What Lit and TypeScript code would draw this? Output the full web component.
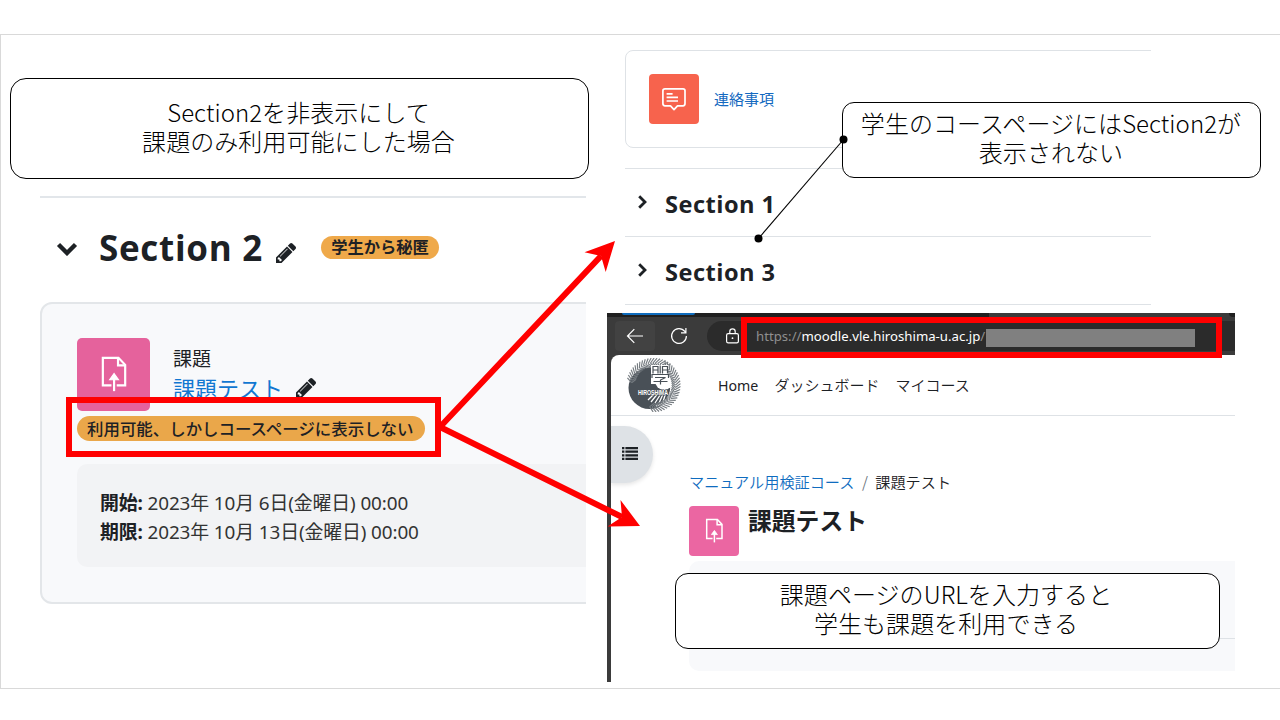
import { LitElement, html, svg, css } from "lit";
import { customElement, property } from "lit/decorators.js";

const pencil = html`<svg class="pencil" viewBox="128 149 1515 1515" preserveAspectRatio="none">
  <path fill="#1d2125" d="M491 1536l91-91-235-235-91 91v107h128v128h107zm523-928q0-22-22-22-10 0-17 7l-542 542q-7 7-7 17 0 22 22 22 10 0 17-7l542-542q7-7 7-17zm-54-192l416 416-832 832h-416v-416zm683 96q0 53-37 90l-166 166-416-416 166-165q36-38 90-38 53 0 91 38l235 234q37 39 37 91z"/>
</svg>`;

const assignIcon = html`<svg class="glyph" viewBox="0 0 50 50" fill="none" stroke="#fff" stroke-width="1.5">
  <path d="M23.6 32.4H17.7V13.6H28.4L33 18.4V32.4H27.2"/>
  <path d="M28.1 13.6V18.8H33" />
  <path d="M25.4 36.4V26"/>
  <path d="M25.4 24.4L28.4 28.6H22.4Z" fill="#fff" stroke-width=".8"/>
</svg>`;

const forumIcon = html`<svg class="glyph" viewBox="0 0 50 50" fill="none" stroke="#fff" stroke-width="1.7" stroke-linejoin="round">
  <path d="M16 14.8H34Q36 14.8 36 16.8V29.6Q36 31.9 34 31.9H28.5L25 35.6L21.5 31.9H16Q13.9 31.9 13.9 29.6V16.8Q13.9 14.8 16 14.8Z"/>
  <path d="M17.6 19.8H23.6M17.6 23.4H29M17.6 27H29"/>
</svg>`;

/** Leaf strokes fanned along an arc around the crest. */
function leaves(cx: number, cy: number, r: number, from: number, to: number, n: number, lean: number) {
  const out = [];
  for (let i = 0; i < n; i++) {
    const a = ((from + ((to - from) * i) / (n - 1)) * Math.PI) / 180;
    const x = cx + r * Math.cos(a);
    const y = cy + r * Math.sin(a);
    for (const [s, len] of [[lean, 6.4], [Math.PI - lean, 5.6]]) {
      const b = a + s;
      out.push(svg`<path d="M${x} ${y}L${x + len * Math.cos(b)} ${y + len * Math.sin(b)}"/>`);
    }
  }
  return out;
}

@customElement("uni-crest")
class UniCrest extends LitElement {
  static styles = css`
    :host { display: block; width: 56px; height: 54px; }
    svg { display: block; width: 100%; height: 100%; }
    text { font-family: "Liberation Sans", sans-serif; }
  `;
  render() {
    return html`<svg viewBox="0 0 56 54">
      <circle cx="23.5" cy="30" r="21" fill="#495057"/>
      <path d="M2 22A23 23 0 0 1 44 8L52 20L46 34L40 12Q20 4 6 18Z" fill="#fff"/>
      <circle cx="38" cy="23" r="9" fill="#fff"/>
      <g stroke="#fff" stroke-width="1.3" fill="none">
        <path d="M22 42L30 34M25 44L33 34M29 45L36 34M33 45L38 34M37 44L40 34"/>
        <path d="M45 28A20 20 0 0 1 30 48"/>
      </g>
      <g stroke="#757b80" stroke-width="1.15" fill="none">
        ${leaves(27.5, 27, 22, 186, 300, 19, 0.75)}
        ${leaves(27.5, 27, 22, -56, 100, 26, -0.75)}
      </g>
      <path fill="#fff" d="M25 7H42V26H25Z"/>
      <g stroke="#495057" stroke-width="1.2" fill="none">
        <path d="M27 8V15.5M32 8V15.5M27 8.5H32M27 12H32M36.5 8V15.5M41.5 8V15.5M36.5 8.5H41.5M36.5 12H41.5M34.2 7.5V15.5M26 20V16.5H42.5V20M29 19.5H39.5L34.5 22V26.5M27.5 23.5H41.5"/>
      </g>
      <text x="12" y="37" font-size="6.8" font-weight="700" fill="#fff" stroke="#495057" stroke-width="1" paint-order="stroke" textLength="30" lengthAdjust="spacingAndGlyphs">HIROSHIMA</text>
    </svg>`;
  }
}

@customElement("course-editor")
class CourseEditor extends LitElement {
  static styles = css`
    :host { display: block; color: #1d2125; font-family: "Noto Sans", "Noto Sans CJK JP", sans-serif; overflow: hidden; }
    .wrap { border-top: 2px solid #e2e6ea; }
    .head { display: flex; align-items: center; height: 104px; padding-left: 16px; }
    .chev { width: 22px; height: 14px; margin-bottom: 1px; }
    .title { margin: 0 0 3px 21px; width: 166px; font: 700 35px/48px "Open Sans", sans-serif; white-space: nowrap; letter-spacing: .7px; }
    .pencil { width: 20px; height: 20px; flex: none; }
    .head .pencil { margin: 7px 0 0 11px; }
    .badge { background: #efa94a; border-radius: 13px; font-weight: 600; white-space: nowrap; }
    .head .badge { margin: 0 0 4px 25px; width: 118px; height: 23px; line-height: 22px; font-size: 16.3px; text-align: center; font-weight: 700; }
    .card { box-sizing: border-box; height: 302px; width: 560px; border: 2px solid #e3e6e9; border-radius: 12px; background: #f8f9fb; padding: 34px 0 0 35px; }
    .activity { display: flex; height: 73px; }
    .tile { width: 73px; height: 73px; border-radius: 5px; background: #e5629c; }
    .glyph { display: block; width: 100%; height: 100%; }
    .names { margin-left: 23px; padding-top: 7px; }
    .kind { font-size: 19px; line-height: 29px; height: 28px; }
    .link { display: flex; align-items: center; color: #1177d1; font-size: 22px; line-height: 30px; height: 30px; }
    .link .pencil { margin: 1px 0 0 13px; }
    .avail { margin-top: 5px; width: 338px; height: 25px; padding-left: 10px; font-size: 16.45px; line-height: 26px; }
    .card .badge { background: #eaa74a; font-weight: 500; }
    .dates { margin-top: 23px; height: 78px; padding: 25px 0 0 23px; border-radius: 10px; background: #f2f3f5; font: 18.9px/29px "Noto Sans", "Noto Sans CJK JP", sans-serif; color: #333; white-space: nowrap; }
    .dates b { color: #1d2125; }
    .dates div { letter-spacing: -.12px; height: 29px; }
  `;
  render() {
    return html`<div class="wrap">
      <div class="head">
        <svg class="chev" viewBox="0 0 22 14"><path d="M2.5 2.5L11 11L19.5 2.5" fill="none" stroke="#1d2125" stroke-width="4.4"/></svg>
        <h2 class="title">Section 2</h2>
        ${pencil}
        <span class="badge">学生から秘匿</span>
      </div>
      <div class="card">
        <div class="activity">
          <div class="tile">${assignIcon}</div>
          <div class="names">
            <div class="kind">課題</div>
            <div class="link"><span>課題テスト</span>${pencil}</div>
          </div>
        </div>
        <div class="badge avail">利用可能、しかしコースページに表示しない</div>
        <div class="dates">
          <div><b>開始:</b> 2023年 10月 6日(金曜日) 00:00</div>
          <div><b>期限:</b> 2023年 10月 13日(金曜日) 00:00</div>
        </div>
      </div>
    </div>`;
  }
}

@customElement("student-course")
class StudentCourse extends LitElement {
  static styles = css`
    :host { display: block; overflow: hidden; color: #1d2125; font-family: "Noto Sans CJK JP", sans-serif; }
    .card { box-sizing: border-box; width: 540px; height: 98px; border: 1px solid #dee2e6; border-radius: 8px; display: flex; align-items: center; padding-left: 23px; margin-bottom: 20px; }
    .tile { width: 50px; height: 50px; border-radius: 4px; background: #f7634d; }
    .glyph { display: block; width: 100%; height: 100%; }
    .name { margin: 0 0 2px 15px; color: #1469c0; font-size: 15px; }
    .row { box-sizing: border-box; height: 68px; border-top: 1px solid #dee2e6; display: flex; align-items: center; padding: 3px 0 0 12px; font: 700 23.6px/32px "Open Sans", sans-serif; letter-spacing: .48px; }
    .row svg { width: 11px; height: 16px; margin: 0 17px 4px 0; }
    .end { border-top: 1px solid #dee2e6; }
  `;
  render() {
    return html`
      <div class="card"><div class="tile">${forumIcon}</div><span class="name">連絡事項</span></div>
      ${["Section 1", "Section 3"].map(
        (s) => html`<div class="row">
          <svg viewBox="0 0 11 16"><path d="M2.2 2.2L8 8L2.2 13.8" fill="none" stroke="#1d2125" stroke-width="2.8"/></svg>${s}
        </div>`
      )}
      <div class="end"></div>`;
  }
}

@customElement("browser-window")
class BrowserWindow extends LitElement {
  static styles = css`
    :host { display: flex; flex-direction: column; overflow: hidden; background: #3b3b3b; color: #1d2125; font-family: "Noto Sans", "Noto Sans CJK JP", sans-serif; }
    .tabs { height: 4px; display: flex; background: #3b3b3b; }
    .tabs .dark { width: 382px; background: #202020; padding-left: 15px; box-sizing: border-box; }
    .tabs .blue { width: 73px; height: 2px; background: #0f6cbd; border-radius: 0 0 8px 8px; }
    .tabs .last { margin-left: auto; width: 6px; background: #202020; border-radius: 0 0 0 4px; }
    .bar { height: 38px; display: flex; align-items: center; padding-left: 8px; }
    .back { width: 40px; height: 30px; background: #424242; border-radius: 4px; display: grid; place-items: center; }
    .reload { width: 18px; height: 18px; margin: 0 19px 0 15px; }
    .url { flex: 1; height: 30px; background: #2b2b2b; border-radius: 15px 0 0 15px; display: flex; align-items: center; padding-left: 18px; font: 13.2px/20px "Noto Sans", sans-serif; color: #8f8f8f; white-space: nowrap; }
    .url .addr { margin-left: 16px; width: 230px; }
    .url .host { color: #fff; }
    .mask { width: 209px; height: 18px; background: #808080; margin-top: 3px; }
    .page { flex: 1; margin-left: 4px; background: #fff; border-top-left-radius: 8px; display: flex; flex-direction: column; }
    .nav { height: 60px; border-bottom: 1px solid #dee2e6; display: flex; align-items: center; padding-left: 15px; font-size: 15px; }
    .nav uni-crest { margin-right: 36px; }
    .nav a { margin: 0 16px 2px 0; font-family: "Noto Sans CJK JP"; font-weight: 350; }
    .nav .home { font: 14.2px "Noto Sans"; margin-bottom: 0; }
    .body { flex: 1; display: flex; align-items: flex-start; }
    .drawer { width: 42px; height: 57px; margin-top: 10px; background: #dee2e6; border-radius: 0 29px 29px 0; box-shadow: 0 2px 4px rgba(0,0,0,.1); display: flex; align-items: center; padding: 0 0 2px 11px; box-sizing: border-box; }
    .main { flex: 1; margin-left: 36px; padding-top: 52px; }
    .crumbs { display: flex; font: 350 15.15px/26px "Noto Sans CJK JP"; }
    .crumbs .link { color: #0f6cbf; }
    .crumbs .sep { width: 21px; text-align: center; color: #6a737b; }
    .heading { display: flex; margin-top: 12px; }
    .tile { width: 50px; height: 50px; border-radius: 4px; background: #eb66a2; }
    .glyph { display: block; width: 100%; height: 100%; }
    h1 { margin: -1px 0 0 9px; font: 700 23.8px/30px "Noto Sans CJK JP"; }
    .panel { height: 110px; margin-top: 5px; background: #f8f9fb; border-radius: 10px 0 0 10px; box-sizing: border-box; padding: 77px 0 0 24px; }
    .rule { height: 1px; background: #dee2e6; }
  `;
  render() {
    return html`
      <div class="tabs"><div class="dark"><div class="blue"></div></div><div class="last"></div></div>
      <div class="bar">
        <div class="back"><svg width="18" height="16" viewBox="0 0 18 16" fill="none" stroke="#fff" stroke-width="1.2"><path d="M17 8H1.5M8.3 1.2L1.5 8L8.3 14.8"/></svg></div>
        <svg class="reload" viewBox="0 0 18 18" fill="none" stroke="#fff" stroke-width="1.2"><path d="M16.4 9A7.4 7.4 0 1 1 14.8 4.4L15.8 5.6M15.9 1V5.8H11"/></svg>
        <div class="url">
          <svg width="15" height="16" viewBox="0 0 15 16" fill="none" stroke="#fff" stroke-width="1.2"><rect x="1.6" y="5.6" width="11.8" height="9.2" rx="1.6"/><path d="M4.8 5.6V3.6A2.7 2.7 0 0 1 10.2 3.6V5.6"/><circle cx="7.5" cy="10.2" r=".9" fill="#fff" stroke="none"/></svg>
          <div class="addr">https://<span class="host">moodle.vle.hiroshima-u.ac.jp</span>/</div>
          <div class="mask"></div>
        </div>
      </div>
      <div class="page">
        <div class="nav">
          <uni-crest></uni-crest>
          <a class="home">Home</a><a>ダッシュボード</a><a>マイコース</a>
        </div>
        <div class="body">
          <div class="drawer"><svg width="16" height="13" viewBox="0 0 16 13" fill="#1d2125"><path d="M0 0h2.4v2.2H0zM3.4 0H16v2.2H3.4zM0 3.6h2.4v2.2H0zM3.4 3.6H16v2.2H3.4zM0 7.2h2.4v2.2H0zM3.4 7.2H16v2.2H3.4zM0 10.8h2.4V13H0zM3.4 10.8H16V13H3.4z"/></svg></div>
          <div class="main">
            <div class="crumbs"><span class="link">マニュアル用検証コース</span><span class="sep">/</span><span>課題テスト</span></div>
            <div class="heading"><div class="tile">${assignIcon}</div><h1>課題テスト</h1></div>
            <div class="panel"><div class="rule"></div></div>
          </div>
        </div>
      </div>`;
  }
}

@customElement("note-box")
class NoteBox extends LitElement {
  @property({ type: Array }) lines: string[] = [];
  static styles = css`
    :host { box-sizing: border-box; display: flex; flex-direction: column; align-items: center; justify-content: center; background: #fff; border: 1px solid #000; border-radius: 16px; color: #000; font: 300 24px/29px "Noto Sans CJK JP", sans-serif; white-space: nowrap; letter-spacing: .06px; }
    .line { height: 29px; }
  `;
  render() {
    return this.lines.map((l) => html`<div class="line">${l}</div>`);
  }
}

@customElement("app-root")
class AppRoot extends LitElement {
  static styles = css`
    :host { display: block; position: relative; width: 1280px; height: 720px; overflow: hidden; background: #fff; }
    .slide { position: absolute; inset: 34px 0 31px 0; border: 1px solid #d9d9d9; border-right: 0; }
    .item { position: absolute; }
    .editor { left: 40px; top: 195.5px; width: 546px; height: 412px; }
    .student { left: 625px; top: 50px; width: 526px; height: 255px; }
    .window { left: 607px; top: 313px; width: 628px; height: 369px; }
    .n1 { left: 10px; top: 78px; width: 579px; height: 101px; padding: 0 2px 6px 0; }
    .n2 { left: 842px; top: 102px; width: 419px; height: 76px; border-radius: 12px; padding: 0 1px 7px 0; }
    .n3 { left: 675px; top: 573px; width: 545px; height: 76px; border-radius: 13px; padding: 0 3px 7px 0; }
    .frame { box-sizing: border-box; border: 6px solid #f00; }
    .f1 { left: 66px; top: 397px; width: 375px; height: 60px; }
    .f2 { left: 741px; top: 317px; width: 481px; height: 41px; }
    .ink { inset: 0; width: 1280px; height: 720px; }
  `;
  render() {
    return html`
      <div class="slide"></div>
      <course-editor class="item editor"></course-editor>
      <student-course class="item student"></student-course>
      <browser-window class="item window"></browser-window>
      <note-box class="item n1" .lines=${["Section2を非表示にして", "課題のみ利用可能にした場合"]}></note-box>
      <note-box class="item n2" .lines=${["学生のコースページにはSection2が", "表示されない"]}></note-box>
      <note-box class="item n3" .lines=${["課題ページのURLを入力すると", "学生も課題を利用できる"]}></note-box>
      <div class="item frame f1"></div>
      <div class="item frame f2"></div>
      <svg class="item ink" viewBox="0 0 1280 720">
        <g stroke="#f00" stroke-width="6"><path d="M440 427L601 256M440 427L622 517"/></g>
        <path fill="#f00" d="M615 241L584.5 252.2L601 256L605.7 272ZM640 526L620.5 500L622 517L607.5 526.5Z"/>
        <path d="M843.5 139.5L758.5 238.5" stroke="#000" stroke-width="1.1"/>
        <circle cx="843.5" cy="139.5" r="4"/><circle cx="758.5" cy="238.5" r="4"/>
      </svg>`;
  }
}
